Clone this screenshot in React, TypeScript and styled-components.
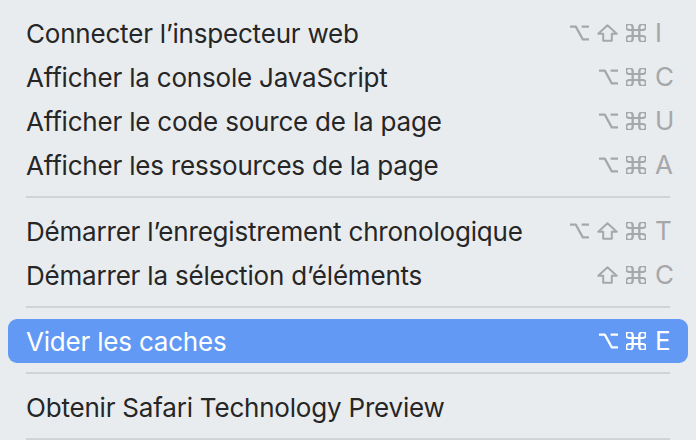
import React from "react";
import styled, { createGlobalStyle } from "styled-components";

const GlobalStyle = createGlobalStyle`
  html, body {
    margin: 0;
    padding: 0;
    background: #e9ecef;
  }
  body {
    font-family: Inter, "Noto Sans", "Liberation Sans", sans-serif;
    -webkit-font-smoothing: antialiased;
  }
`;

type Mod = "opt" | "shift" | "cmd";

type Entry =
    | { kind: "item"; label: string; mods: Mod[]; keyName: string; active?: boolean }
    | { kind: "sep" };

const entries: Entry[] = [
    { kind: "item", label: "Connecter l\u2019inspecteur web", mods: ["opt", "shift", "cmd"], keyName: "I" },
    { kind: "item", label: "Afficher la console JavaScript", mods: ["opt", "cmd"], keyName: "C" },
    { kind: "item", label: "Afficher le code source de la page", mods: ["opt", "cmd"], keyName: "U" },
    { kind: "item", label: "Afficher les ressources de la page", mods: ["opt", "cmd"], keyName: "A" },
    { kind: "sep" },
    { kind: "item", label: "D\u00e9marrer l\u2019enregistrement chronologique", mods: ["opt", "shift", "cmd"], keyName: "T" },
    { kind: "item", label: "D\u00e9marrer la s\u00e9lection d\u2019\u00e9l\u00e9ments", mods: ["shift", "cmd"], keyName: "C" },
    { kind: "sep" },
    { kind: "item", label: "Vider les caches", mods: ["opt", "cmd"], keyName: "E", active: true },
    { kind: "sep" },
    { kind: "item", label: "Obtenir Safari Technology Preview", mods: [], keyName: "" },
    { kind: "sep" },
];

const Menu = styled.div`
    display: flex;
    flex-direction: column;
    padding: 11px 8px 0 8px;
    width: 696px;
    height: 440px;
    box-sizing: border-box;
    overflow: hidden;
`;

const Row = styled.div<{ $active?: boolean }>`
    display: flex;
    align-items: center;
    height: 44px;
    flex-shrink: 0;
    padding: 0 16px 0 18px;
    border-radius: 9px;
    background: ${(p) => (p.$active ? "#6199f5" : "transparent")};
    color: ${(p) => (p.$active ? "#ffffff" : "#262626")};
`;

const Label = styled.span`
    flex: 1;
    font-size: 26px;
    letter-spacing: -0.2px;
    white-space: nowrap;
`;

const Shortcut = styled.div<{ $active?: boolean }>`
    display: flex;
    align-items: center;
    color: ${(p) => (p.$active ? "#ffffff" : "#a6a7a9")};
`;

const Mods = styled.div`
    display: flex;
    align-items: center;
    gap: 8px;
    margin-right: 9px;
`;

const KeyName = styled.span`
    width: 17px;
    font-size: 26px;
    line-height: 1;
`;

const Separator = styled.div`
    flex-shrink: 0;
    height: 2px;
    margin: 9px 18px 11px 18px;
    background: #d1d4d7;
`;

const ModIcon = ({ mod }: { mod: Mod }) => {
    if (mod === "opt") {
        return (
            <svg width="19" height="16" viewBox="0 0 19 16" fill="none" stroke="currentColor" strokeWidth="2.2" strokeLinejoin="round">
                <path d="M0 1.6H5.8L12.8 14.4H19M11.6 1.6H19" />
            </svg>
        );
    }
    if (mod === "shift") {
        return (
            <svg width="21" height="18" viewBox="0 0 21 18" fill="none" stroke="currentColor" strokeWidth="2" strokeLinejoin="round">
                <path d="M10.5 1.3L19.7 9.8H14.8V16.7H6.2V9.8H1.3Z" />
            </svg>
        );
    }
    return (
        <svg width="20" height="18" viewBox="3 3 18 18" preserveAspectRatio="none" fill="none" stroke="currentColor" strokeWidth="2.1">
            <path d="M15 6v12a3 3 0 1 0 3-3H6a3 3 0 1 0 3 3V6a3 3 0 1 0-3 3h12a3 3 0 1 0-3-3" />
        </svg>
    );
};

export default function App() {
    return (
        <>
            <GlobalStyle />
            <Menu>
                {entries.map((e, i) =>
                    e.kind === "sep" ? (
                        <Separator key={i} />
                    ) : (
                        <Row key={i} $active={e.active}>
                            <Label>{e.label}</Label>
                            {e.keyName && (
                                <Shortcut $active={e.active}>
                                    <Mods>
                                        {e.mods.map((m) => (
                                            <ModIcon key={m} mod={m} />
                                        ))}
                                    </Mods>
                                    <KeyName>{e.keyName}</KeyName>
                                </Shortcut>
                            )}
                        </Row>
                    )
                )}
            </Menu>
        </>
    );
}
